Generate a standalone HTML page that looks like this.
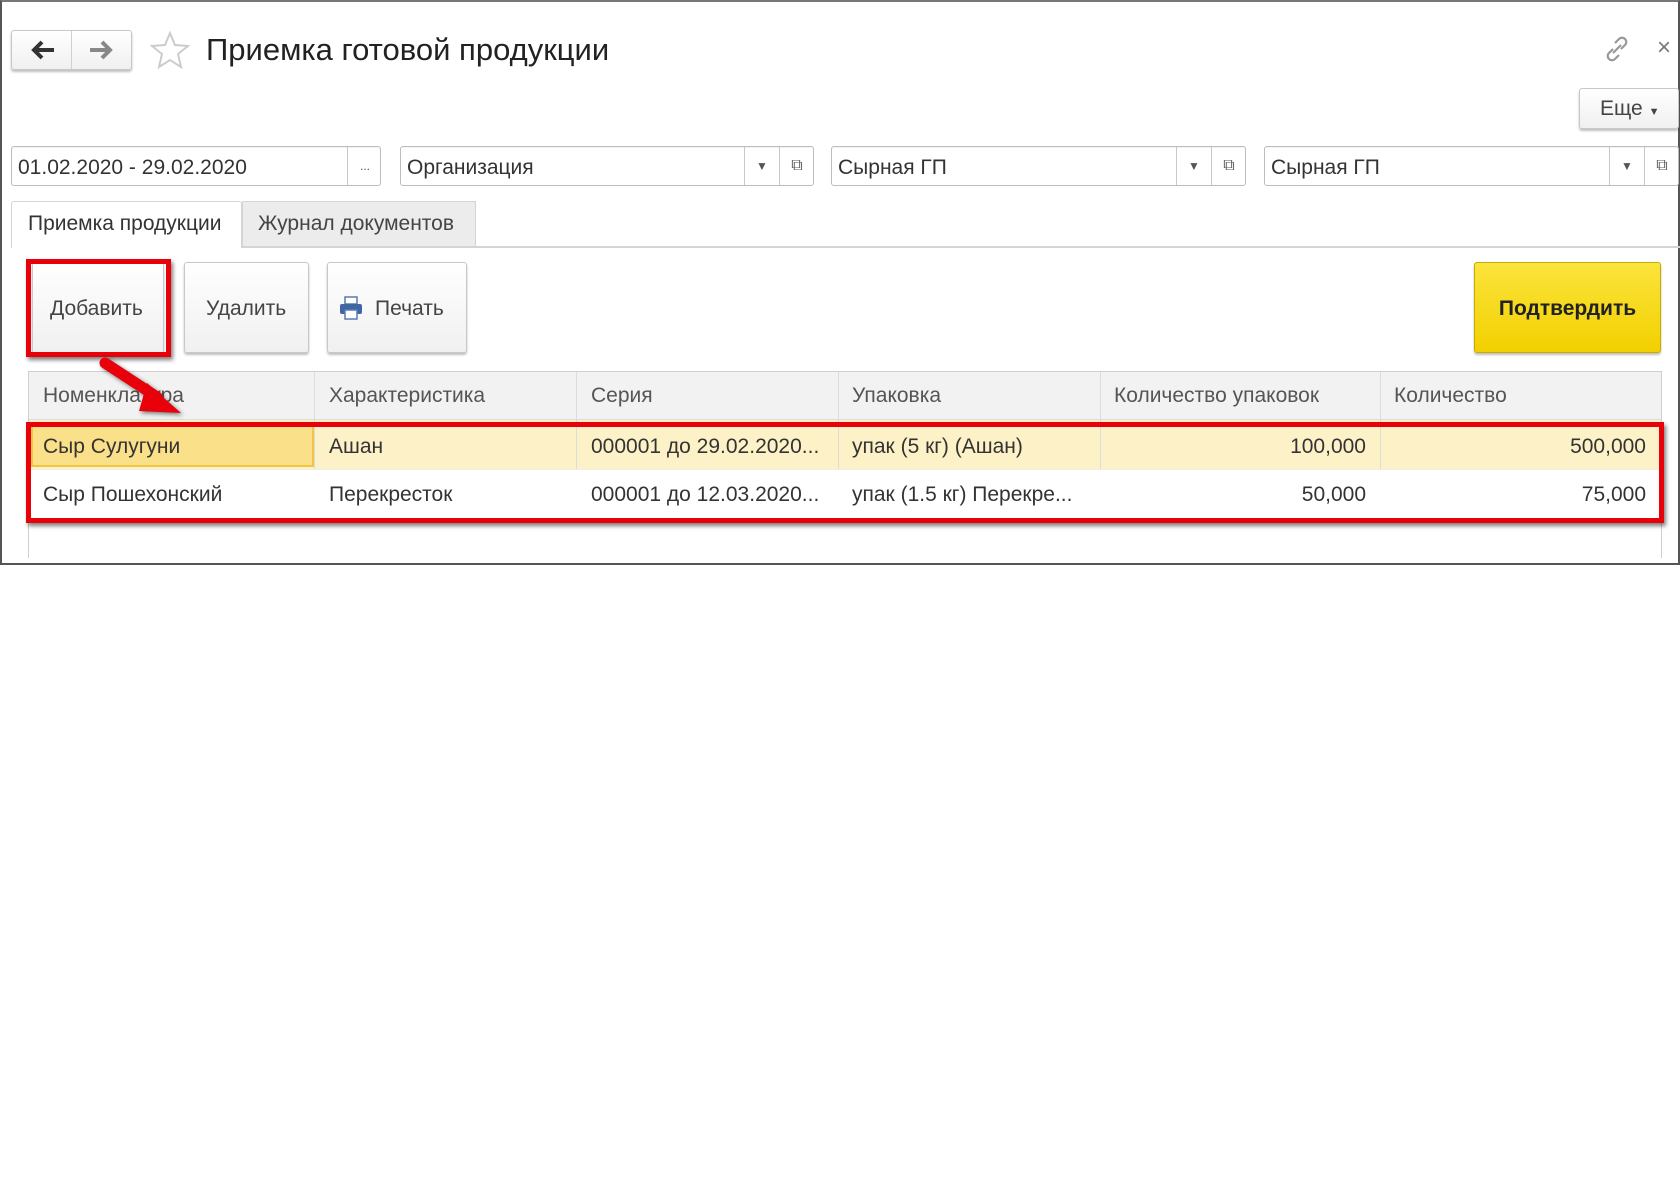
<!DOCTYPE html>
<html><head><meta charset="utf-8">
<style>
*{box-sizing:border-box;margin:0;padding:0}
body{width:1680px;height:1192px;background:#fff;font-family:"Liberation Sans",Arial,sans-serif;position:relative;overflow:hidden;color:#333}
.abs{position:absolute}
.frame{left:0;top:0;width:1680px;height:565px;border:2px solid #555;border-top-color:#777}
.btn{background:linear-gradient(#fff,#f0f0f0);border:1px solid #c8c8c8;border-radius:3px;box-shadow:0 2px 2px rgba(0,0,0,.25)}
.field{border:1px solid #bdbdbd;border-radius:3px;background:#fff;height:40px;box-shadow:inset 0 1px 1px rgba(0,0,0,.05)}
.field span.t{position:absolute;left:6px;top:9px;font-size:21px;color:#333}
.seg{position:absolute;top:0;height:38px;border-left:1px solid #c8c8c8;width:35px;text-align:center;font-size:12px;line-height:38px;color:#555}
.cell{position:absolute;font-size:21px;color:#333;white-space:nowrap}
.hdr{color:#555}
.vl{position:absolute;width:1px;background:#dcdcdc}
</style></head><body>
<div class="abs frame"></div>

<!-- nav -->
<div class="abs btn" style="left:11px;top:30px;width:121px;height:40px"></div>
<div class="abs" style="left:71px;top:31px;width:1px;height:38px;background:#d0d0d0"></div>
<svg class="abs" style="left:28px;top:38px" width="30" height="24" viewBox="0 0 30 24"><path d="M26 12H7M14 4l-8 8 8 8" stroke="#333" stroke-width="4" fill="none"/></svg>
<svg class="abs" style="left:86px;top:38px" width="30" height="24" viewBox="0 0 30 24"><path d="M4 12h19M16 4l8 8-8 8" stroke="#888" stroke-width="4" fill="none"/></svg>
<svg class="abs" style="left:150px;top:31px" width="40" height="38" viewBox="0 0 40 38"><path d="M20 2l5 12 13 1-10 8 3 13-11-7-11 7 3-13-10-8 13-1z" fill="none" stroke="#ccc" stroke-width="2"/></svg>
<div class="abs" style="left:206px;top:32px;font-size:31px;color:#222">Приемка готовой продукции</div>
<svg class="abs" style="left:1602px;top:34px" width="30" height="30" viewBox="0 0 30 30"><g fill="none" stroke="#999" stroke-width="2.2"><path d="M13 9l4-4a4 4 0 016 6l-4 4"/><path d="M17 21l-4 4a4 4 0 01-6-6l4-4"/><path d="M11 19l8-8"/></g></svg>
<div class="abs" style="left:1657px;top:34px;font-size:24px;color:#777">×</div>

<div class="abs btn" style="left:1579px;top:88px;width:100px;height:41px"></div>
<div class="abs" style="left:1600px;top:97px;font-size:21px;color:#444">Еще <span style="font-size:11px">▼</span></div>

<!-- fields -->
<div class="abs field" style="left:11px;top:146px;width:370px"><span class="t">01.02.2020 - 29.02.2020</span><div class="seg" style="left:335px">...</div></div>
<div class="abs field" style="left:400px;top:146px;width:414px"><span class="t">Организация</span><div class="seg" style="left:343px">▼</div><div class="seg" style="left:378px;font-size:16px">⧉</div></div>
<div class="abs field" style="left:831px;top:146px;width:415px"><span class="t">Сырная ГП</span><div class="seg" style="left:344px">▼</div><div class="seg" style="left:379px;font-size:16px">⧉</div></div>
<div class="abs field" style="left:1264px;top:146px;width:415px"><span class="t">Сырная ГП</span><div class="seg" style="left:344px">▼</div><div class="seg" style="left:379px;font-size:16px">⧉</div></div>

<!-- tabs -->
<div class="abs" style="left:11px;top:246px;width:1669px;height:2px;background:#d4d4d4"></div>
<div class="abs" style="left:11px;top:201px;width:231px;height:47px;background:#fff;border:1px solid #d4d4d4;border-bottom:none;border-radius:3px 3px 0 0"></div>
<div class="abs" style="left:28px;top:212px;font-size:21px;color:#333">Приемка продукции</div>
<div class="abs" style="left:242px;top:201px;width:234px;height:45px;background:#ececec;border:1px solid #d4d4d4;border-bottom:none"></div>
<div class="abs" style="left:258px;top:212px;font-size:21px;color:#444">Журнал документов</div>

<!-- buttons -->
<div class="abs btn" style="left:32px;top:262px;width:132px;height:92px"></div>
<div class="abs" style="left:50px;top:297px;font-size:21px;color:#444">Добавить</div>
<div class="abs" style="left:26px;top:259px;width:145px;height:98px;border:5px solid #e8000b;box-shadow:2px 3px 4px rgba(0,0,0,.5)"></div>
<div class="abs btn" style="left:184px;top:262px;width:125px;height:91px"></div>
<div class="abs" style="left:206px;top:297px;font-size:21px;color:#444">Удалить</div>
<div class="abs btn" style="left:327px;top:262px;width:140px;height:91px"></div>
<svg class="abs" style="left:339px;top:296px" width="24" height="24" viewBox="0 0 24 24"><rect x="6" y="1" width="12" height="7" fill="#fff" stroke="#5a7bb0" stroke-width="1.5"/><rect x="1" y="8" width="22" height="10" rx="2" fill="#3f66a3"/><rect x="6" y="14" width="12" height="9" fill="#fff" stroke="#5a7bb0" stroke-width="1.5"/></svg>
<div class="abs" style="left:375px;top:297px;font-size:21px;color:#444">Печать</div>
<div class="abs" style="left:1474px;top:262px;width:187px;height:91px;background:linear-gradient(#fbe43c,#f2d000);border:1px solid #c9aa00;border-radius:3px;box-shadow:0 2px 2px rgba(0,0,0,.25)"></div>
<div class="abs" style="left:1474px;top:297px;width:187px;text-align:center;font-size:21px;font-weight:bold;color:#222">Подтвердить</div>

<!-- table -->
<div class="abs" style="left:28px;top:371px;width:1634px;height:187px;border:1px solid #cfcfcf;border-bottom:none;background:#fff"></div>
<div class="abs" style="left:29px;top:372px;width:1632px;height:48px;background:#f2f2f2;border-bottom:1px solid #ddd"></div>
<div class="abs" style="left:29px;top:420px;width:1632px;height:49px;background:#fdf2c7"></div>
<div class="abs" style="left:31px;top:422px;width:283px;height:45px;background:#fbe08a;border:2px solid #f0c640"></div>
<div class="abs" style="left:29px;top:469px;width:1632px;height:1px;background:#eee"></div>
<div class="vl" style="left:314px;top:372px;height:97px"></div>
<div class="vl" style="left:576px;top:372px;height:97px"></div>
<div class="vl" style="left:838px;top:372px;height:97px"></div>
<div class="vl" style="left:1100px;top:372px;height:97px"></div>
<div class="vl" style="left:1380px;top:372px;height:97px"></div>

<div class="cell hdr" style="left:43px;top:384px">Номенклатура</div>
<div class="cell hdr" style="left:329px;top:384px">Характеристика</div>
<div class="cell hdr" style="left:591px;top:384px">Серия</div>
<div class="cell hdr" style="left:852px;top:384px">Упаковка</div>
<div class="cell hdr" style="left:1114px;top:384px">Количество упаковок</div>
<div class="cell hdr" style="left:1394px;top:384px">Количество</div>

<div class="cell" style="left:43px;top:435px">Сыр Сулугуни</div>
<div class="cell" style="left:329px;top:435px">Ашан</div>
<div class="cell" style="left:591px;top:435px">000001 до 29.02.2020...</div>
<div class="cell" style="left:852px;top:435px">упак (5 кг) (Ашан)</div>
<div class="cell" style="left:1100px;top:435px;width:266px;text-align:right">100,000</div>
<div class="cell" style="left:1380px;top:435px;width:266px;text-align:right">500,000</div>

<div class="cell" style="left:43px;top:483px">Сыр Пошехонский</div>
<div class="cell" style="left:329px;top:483px">Перекресток</div>
<div class="cell" style="left:591px;top:483px">000001 до 12.03.2020...</div>
<div class="cell" style="left:852px;top:483px">упак (1.5 кг) Перекре...</div>
<div class="cell" style="left:1100px;top:483px;width:266px;text-align:right">50,000</div>
<div class="cell" style="left:1380px;top:483px;width:266px;text-align:right">75,000</div>

<div class="abs" style="left:26px;top:422px;width:1638px;height:101px;border:5px solid #e8000b;box-shadow:2px 3px 4px rgba(0,0,0,.5)"></div>

<!-- arrow -->
<svg class="abs" style="left:95px;top:355px" width="100" height="70" viewBox="0 0 100 70"><g filter="drop-shadow(2px 2px 2px rgba(0,0,0,.5))"><path d="M10 8L62 42" stroke="#e8000b" stroke-width="11" stroke-linecap="round"/><path d="M52 28L86 58 44 56z" fill="#e8000b"/></g></svg>
</body></html>
